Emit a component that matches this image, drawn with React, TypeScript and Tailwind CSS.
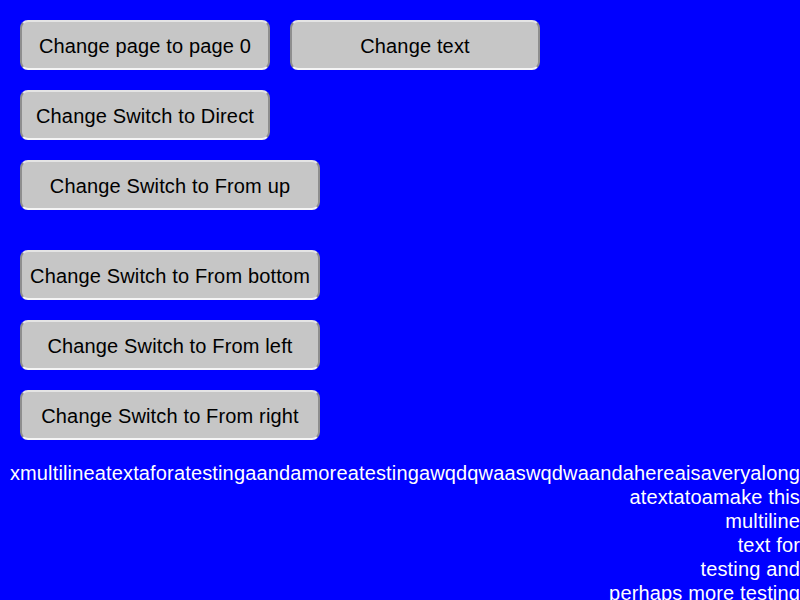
import React from "react";

const Btn = ({ label, w }: { label: string; w: string }) => (
  <div
    className={`${w} h-[50px] flex items-center justify-center pt-[2px] rounded-[8px] bg-[#c6c6c6] border-2 border-t-[#e4e4e4] border-b-[#f4f4f4] border-l-[#8e8e8e] border-r-[#8e8e8e] text-black text-[20px] leading-[24px] tracking-[0.15px] whitespace-nowrap`}
  >
    {label}
  </div>
);

export default function App() {
  const lines = [
    "xmultilineatextaforatestingaandamoreatestingawqdqwaaswqdwaandahereaisaveryalong",
    "atextatoamake this",
    "multiline",
    "text for",
    "testing and",
    "perhaps more testing",
  ];
  return (
    <div
      className="w-[800px] h-[600px] bg-[#0000ff] overflow-hidden"
      style={{ fontFamily: '"Liberation Sans", Arial, sans-serif' }}
    >
      <div className="flex flex-col pl-[20px] pt-[20px]">
        <div className="flex gap-[20px]">
          <Btn label="Change page to page 0" w="w-[250px]" />
          <Btn label="Change text" w="w-[250px]" />
        </div>
        <div className="mt-[20px]">
          <Btn label="Change Switch to Direct" w="w-[250px]" />
        </div>
        <div className="mt-[20px]">
          <Btn label="Change Switch to From up" w="w-[300px]" />
        </div>
        <div className="mt-[40px]">
          <Btn label="Change Switch to From bottom" w="w-[300px]" />
        </div>
        <div className="mt-[20px]">
          <Btn label="Change Switch to From left" w="w-[300px]" />
        </div>
        <div className="mt-[20px]">
          <Btn label="Change Switch to From right" w="w-[300px]" />
        </div>
      </div>
      <div className="mt-[21px] w-[800px] flex flex-col items-end text-white text-[20px] leading-[24px] tracking-[0.15px]">
        {lines.map((l) => (
          <div key={l} className="whitespace-nowrap">
            {l}
          </div>
        ))}
      </div>
    </div>
  );
}
